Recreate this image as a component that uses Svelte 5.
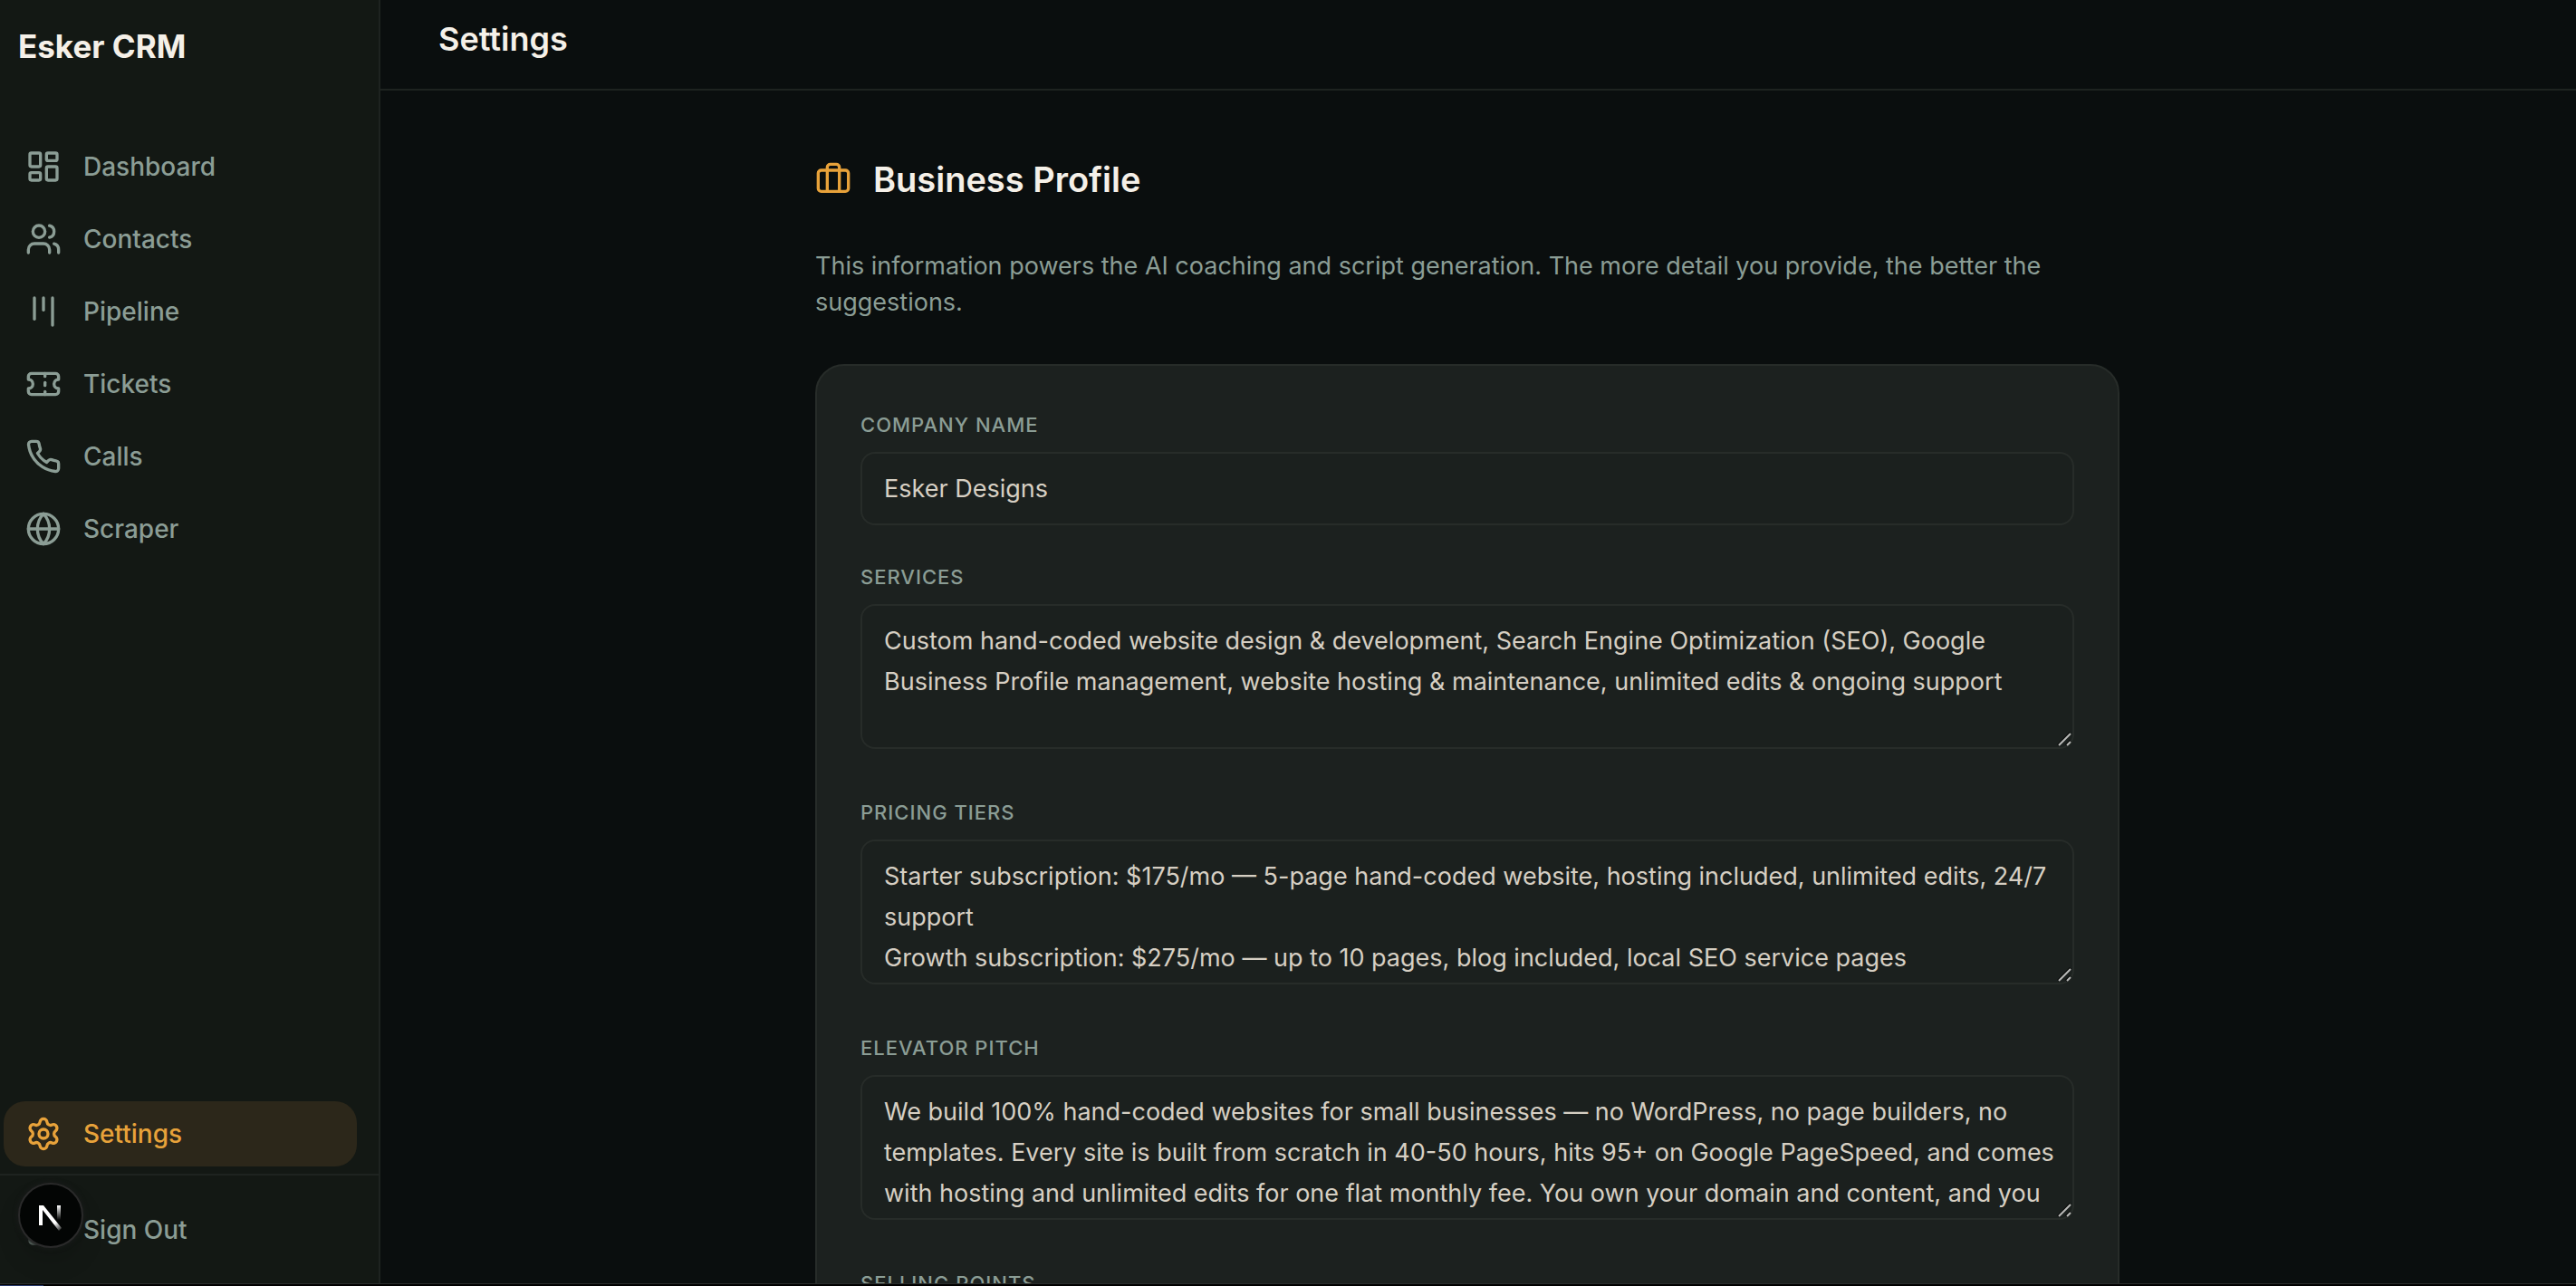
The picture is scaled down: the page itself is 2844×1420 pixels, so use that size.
<script>
  const navItems = [
    { label: "Dashboard", icon: "dashboard" },
    { label: "Contacts", icon: "users" },
    { label: "Pipeline", icon: "kanban" },
    { label: "Tickets", icon: "ticket" },
    { label: "Calls", icon: "phone" },
    { label: "Scraper", icon: "globe" },
  ];

  let companyName = $state("Esker Designs");

  let fields = $state([
    {
      id: "services",
      label: "Services",
      value:
        "Custom hand-coded website design & development, Search Engine Optimization (SEO), Google Business Profile management, website hosting & maintenance, unlimited edits & ongoing support",
    },
    {
      id: "pricing",
      label: "Pricing Tiers",
      value:
        "Starter subscription: $175/mo — 5-page hand-coded website, hosting included, unlimited edits, 24/7 support\nGrowth subscription: $275/mo — up to 10 pages, blog included, local SEO service pages",
    },
    {
      id: "pitch",
      label: "Elevator Pitch",
      value:
        "We build 100% hand-coded websites for small businesses — no WordPress, no page builders, no templates. Every site is built from scratch in 40-50 hours, hits 95+ on Google PageSpeed, and comes with hosting and unlimited edits for one flat monthly fee. You own your domain and content, and you",
    },
    { id: "selling", label: "Selling Points", value: "" },
  ]);
</script>

{#snippet icon(name)}
  <svg class="icon" viewBox="0 0 24 24" aria-hidden="true">
    {#if name === "dashboard"}
      <rect width="7" height="9" x="3" y="3" rx="1" />
      <rect width="7" height="5" x="14" y="3" rx="1" />
      <rect width="7" height="9" x="14" y="12" rx="1" />
      <rect width="7" height="5" x="3" y="16" rx="1" />
    {:else if name === "users"}
      <path d="M16 21v-2a4 4 0 0 0-4-4H6a4 4 0 0 0-4 4v2" />
      <circle cx="9" cy="7" r="4" />
      <path d="M22 21v-2a4 4 0 0 0-3-3.87" />
      <path d="M16 3.13a4 4 0 0 1 0 7.75" />
    {:else if name === "kanban"}
      <path d="M6 3v14" />
      <path d="M12 3v8" />
      <path d="M18 3v18" />
    {:else if name === "ticket"}
      <path
        d="M2 9a3 3 0 0 1 0 6v2a2 2 0 0 0 2 2h16a2 2 0 0 0 2-2v-2a3 3 0 0 1 0-6V7a2 2 0 0 0-2-2H4a2 2 0 0 0-2 2Z"
      />
      <path d="M13 5v2" />
      <path d="M13 17v2" />
      <path d="M13 11v2" />
    {:else if name === "phone"}
      <path
        d="M22 16.92v3a2 2 0 0 1-2.18 2 19.79 19.79 0 0 1-8.63-3.07 19.5 19.5 0 0 1-6-6 19.79 19.79 0 0 1-3.07-8.67A2 2 0 0 1 4.11 2h3a2 2 0 0 1 2 1.72 12.84 12.84 0 0 0 .7 2.81 2 2 0 0 1-.45 2.11L8.09 9.91a16 16 0 0 0 6 6l1.27-1.27a2 2 0 0 1 2.11-.45 12.84 12.84 0 0 0 2.81.7A2 2 0 0 1 22 16.92z"
      />
    {:else if name === "globe"}
      <circle cx="12" cy="12" r="10" />
      <path d="M12 2a14.5 14.5 0 0 0 0 20 14.5 14.5 0 0 0 0-20" />
      <path d="M2 12h20" />
    {:else if name === "settings"}
      <path
        d="M9.671 4.136a2.34 2.34 0 0 1 4.659 0 2.34 2.34 0 0 0 3.319 1.915 2.34 2.34 0 0 1 2.33 4.033 2.34 2.34 0 0 0 0 3.831 2.34 2.34 0 0 1-2.33 4.033 2.34 2.34 0 0 0-3.319 1.915 2.34 2.34 0 0 1-4.659 0 2.34 2.34 0 0 0-3.32-1.915 2.34 2.34 0 0 1-2.33-4.033 2.34 2.34 0 0 0 0-3.831A2.34 2.34 0 0 1 6.35 6.051a2.34 2.34 0 0 0 3.319-1.915"
      />
      <circle cx="12" cy="12" r="3" />
    {:else if name === "logout"}
      <path d="M9 21H5a2 2 0 0 1-2-2V5a2 2 0 0 1 2-2h4" />
      <path d="m16 17 5-5-5-5" />
      <path d="M21 12H9" />
    {:else if name === "briefcase"}
      <path d="M16 20V4a2 2 0 0 0-2-2h-4a2 2 0 0 0-2 2v16" />
      <rect width="20" height="14" x="2" y="6" rx="2" />
    {/if}
  </svg>
{/snippet}

<div class="app">
  <aside class="sidebar">
    <div class="brand">Esker CRM</div>

    <nav class="nav">
      {#each navItems as item}
        <a class="nav-item" href="#{item.icon}">
          {@render icon(item.icon)}
          {item.label}
        </a>
      {/each}
      <a class="nav-item bottom active" href="#settings">
        {@render icon("settings")}
        Settings
      </a>
    </nav>

    <div class="sidebar-footer">
      <button class="nav-item" type="button">
        {@render icon("logout")}
        Sign Out
      </button>
      <button class="dev-badge" type="button" aria-label="Open Next.js Dev Tools">
        <svg viewBox="0 0 40 40" fill="none" aria-hidden="true">
          <defs>
            <linearGradient id="diag" gradientUnits="userSpaceOnUse" x1="20" y1="22" x2="32" y2="38">
              <stop stop-color="#fff" />
              <stop offset="0.4" stop-color="#fff" />
              <stop offset="1" stop-color="#fff" stop-opacity="0" />
            </linearGradient>
            <linearGradient id="stem" gradientUnits="userSpaceOnUse" x1="29" y1="9" x2="29" y2="25">
              <stop stop-color="#fff" />
              <stop offset="1" stop-color="#fff" stop-opacity="0" />
            </linearGradient>
          </defs>
          <path d="M7 9H12L32 34L29 37L11 14V31H7Z" fill="url(#diag)" />
          <rect x="27" y="9" width="4" height="16" fill="url(#stem)" />
        </svg>
      </button>
    </div>
  </aside>

  <main class="main">
    <header class="topbar">
      <h1>Settings</h1>
    </header>

    <section class="content">
      <h2 class="section-title">
        {@render icon("briefcase")}
        Business Profile
      </h2>
      <p class="intro">
        This information powers the AI coaching and script generation. The more
        detail you provide, the better the suggestions.
      </p>

      <form class="card">
        <div class="field">
          <label for="company">Company Name</label>
          <input id="company" type="text" bind:value={companyName} />
        </div>
        {#each fields as field}
          <div class="field">
            <label for={field.id}>{field.label}</label>
            <div class="textarea-wrap">
              <textarea id={field.id} spellcheck="false" bind:value={field.value}></textarea>
              <svg class="grip" viewBox="0 0 16 16" aria-hidden="true">
                <path d="M1 15 L15 1 M10 15 L15 10" stroke="#0b0d0c" stroke-width="3" />
                <path d="M2 15 L15 2 M11 15 L15 11" stroke="#b9bab8" stroke-width="2" />
              </svg>
            </div>
          </div>
        {/each}
      </form>
    </section>
  </main>
</div>
<div class="strip"></div>

<style>
  :global(*) {
    box-sizing: border-box;
    margin: 0;
    padding: 0;
  }

  :global(body) {
    background: #000;
    overflow: hidden;
  }

  .app {
    display: flex;
    height: calc(100vh - 2px);
    background: #0a0e0e;
    border-bottom: 1px solid #2b2d2c;
    color: #f5f0e8;
    font-family: Inter, "Liberation Sans", sans-serif;
    font-size: 27px;
    overflow: hidden;
  }

  .strip {
    width: 48px;
    height: 2px;
    border-bottom: 1px solid #26386b;
  }

  .icon {
    width: 40px;
    height: 40px;
    flex-shrink: 0;
    fill: none;
    stroke: currentColor;
    stroke-width: 2;
    stroke-linecap: round;
    stroke-linejoin: round;
  }

  .sidebar {
    display: flex;
    flex-direction: column;
    width: 420px;
    flex-shrink: 0;
    background: #131814;
    border-right: 2px solid #1e2320;
  }

  .brand {
    padding: 24px 20px 70px;
    font-size: 35px;
    font-weight: 700;
    line-height: 54px;
  }

  .nav {
    flex: 1;
    display: flex;
    flex-direction: column;
    gap: 8px;
    padding: 0 24px 8px 4px;
  }

  .nav-item {
    display: flex;
    align-items: center;
    gap: 24px;
    width: 100%;
    height: 72px;
    padding: 0 24px;
    background: none;
    border: none;
    border-radius: 24px;
    color: #8b9d95;
    font-family: inherit;
    font-size: 28px;
    font-weight: 500;
    text-decoration: none;
    cursor: pointer;
  }

  .nav-item.bottom {
    margin-top: auto;
  }

  .nav-item.active {
    background: #2c271a;
    color: #e8a23a;
  }

  .sidebar-footer {
    position: relative;
    padding: 24px 24px 23px 4px;
    border-top: 2px solid #1e2320;
  }

  .dev-badge {
    position: absolute;
    top: 8px;
    left: 20px;
    display: grid;
    place-items: center;
    width: 72px;
    height: 72px;
    background: #030504;
    border: 2px solid #2a2a2a;
    border-radius: 50%;
    box-shadow:
      0 0 4px 2px #171a18,
      0 16px 32px -8px rgba(0, 0, 0, 0.24);
    cursor: pointer;
  }

  .dev-badge svg {
    width: 40px;
    height: 40px;
  }

  .main {
    flex: 1;
    min-width: 0;
  }

  .topbar {
    height: 100px;
    padding: 16px 64px;
    border-bottom: 2px solid #1e2320;
  }

  h1 {
    font-size: 36px;
    font-weight: 600;
    line-height: 54px;
  }

  .content {
    max-width: 1464px;
    margin: 0 auto;
    padding: 70px 24px 0 0;
  }

  .section-title {
    display: flex;
    align-items: center;
    gap: 24px;
    margin-bottom: 48px;
    font-size: 38px;
    font-weight: 600;
    line-height: 56px;
  }

  .section-title .icon {
    color: #e8a23a;
  }

  .intro {
    margin-bottom: 48px;
    color: #8b9d95;
    line-height: 40px;
  }

  .card {
    display: flex;
    flex-direction: column;
    gap: 40px;
    padding: 48px;
    background: #1c211f;
    border: 2px solid #272c29;
    border-radius: 32px;
  }

  label {
    display: block;
    margin-bottom: 12px;
    color: #8b9d95;
    font-size: 22px;
    font-weight: 500;
    letter-spacing: 1px;
    line-height: 35px;
    text-transform: uppercase;
  }

  input,
  textarea {
    display: block;
    width: 100%;
    padding: 16px 12px 16px 24px;
    background: #1b201e;
    border: 2px solid #272c29;
    border-radius: 16px;
    color: #d6cfc3;
    font: inherit;
    line-height: 45px;
    outline: none;
  }

  textarea {
    height: 160px;
    overflow: hidden;
    resize: none;
  }

  .textarea-wrap {
    position: relative;
    padding-bottom: 13px;
  }

  .grip {
    position: absolute;
    right: 3px;
    bottom: 16px;
    width: 16px;
    height: 16px;
    fill: none;
  }
</style>
